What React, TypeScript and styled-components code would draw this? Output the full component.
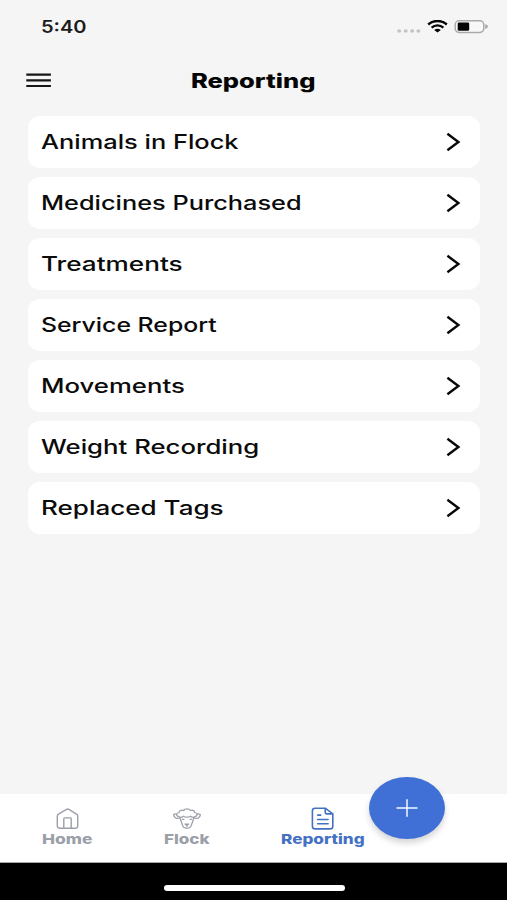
import { useLayoutEffect, useRef, useState } from "react";
import type { ReactNode } from "react";
import styled, { createGlobalStyle } from "styled-components";

const GlobalStyle = createGlobalStyle`
  * { box-sizing: border-box; }
  html, body { margin: 0; padding: 0; }
  body { background: #f5f5f5; font-family: Inter, "Open Sans", sans-serif; }
  button { border: 0; padding: 0; background: none; font: inherit; color: inherit; }
`;

const Screen = styled.div`
  width: 507px;
  height: 900px;
  display: flex;
  flex-direction: column;
  background: #f5f5f5;
  overflow: hidden;
`;

const StatusBar = styled.header`
  height: 53px;
  flex: none;
  display: flex;
  align-items: center;
  justify-content: space-between;
  padding: 0 19px 0 41px;
`;

const StatusIcons = styled.div`
  display: flex;
  align-items: center;
`;

const TitleBar = styled.div`
  height: 55px;
  flex: none;
  display: grid;
  grid-template-columns: 1fr auto 1fr;
  align-items: center;
  padding: 0 27px 0 26px;
`;

const MenuButton = styled.button`
  width: 25px;
  height: 16px;
  display: flex;
`;

const List = styled.main`
  flex: 1;
  display: flex;
  flex-direction: column;
  gap: 9px;
  padding: 8px 27px 0 28px;
`;

const Row = styled.button`
  height: 52px;
  flex: none;
  display: flex;
  align-items: center;
  justify-content: space-between;
  padding: 0 19px 0 13px;
  border-radius: 13px / 11px;
  background: #fff;
`;

const NavBar = styled.nav`
  position: relative;
  height: 69px;
  flex: none;
  display: flex;
  background: #fff;
  border-bottom: 1px solid #a9a9a9;
`;

const NavItem = styled.button<{ $width: number; $active?: boolean }>`
  width: ${(p) => p.$width}px;
  height: 68px;
  display: flex;
  flex-direction: column;
  align-items: center;
  padding-top: 13px;
  color: ${(p) => (p.$active ? "#4571c4" : "#9b9fa8")};

  svg { flex: none; }
`;

const AddButton = styled.button`
  position: absolute;
  left: 369px;
  top: -17px;
  width: 76px;
  height: 62px;
  display: flex;
  align-items: center;
  justify-content: center;
  border-radius: 50%;
  background: #4070d5;
  box-shadow: 0 4px 6px rgba(0, 0, 0, 0.17);
`;

const HomeArea = styled.footer`
  height: 37px;
  flex: none;
  display: flex;
  justify-content: center;
  align-items: flex-start;
  padding: 22px 0 0 1px;
  background: #000;
`;

const HomeIndicator = styled.div`
  width: 181px;
  height: 6px;
  border-radius: 3px;
  background: #fff;
`;

const LabelBox = styled.span<{ $width: number; $size: number; $weight: number; $color: string; $drop: number }>`
  display: block;
  width: ${(p) => p.$width}px;
  padding-top: ${(p) => p.$drop}px;
  font-size: ${(p) => p.$size}px;
  line-height: 1.2;
  font-weight: ${(p) => p.$weight};
  color: ${(p) => p.$color};
  white-space: nowrap;
  text-align: left;
`;

const Stretch = styled.span`
  display: inline-block;
  transform-origin: 0 50%;
`;

type WideLabelProps = {
  width: number;
  size: number;
  weight: number;
  color?: string;
  drop?: number;
  children: ReactNode;
};

/* Extends a line of text horizontally until it fills the given width. */
function WideLabel({ width, size, weight, color = "#0b0b0b", drop = 0, children }: WideLabelProps) {
  const ref = useRef<HTMLSpanElement>(null);
  const [scale, setScale] = useState(1);
  useLayoutEffect(() => {
    if (ref.current) setScale(width / ref.current.offsetWidth);
  }, [width, children]);
  return (
    <LabelBox $width={width} $size={size} $weight={weight} $color={color} $drop={drop}>
      <Stretch ref={ref} style={{ transform: `scaleX(${scale})` }}>{children}</Stretch>
    </LabelBox>
  );
}

const Signal = () => (
  <svg width="24" height="6" viewBox="0 0 24 6" fill="#c3c3c3">
    <ellipse cx="2.2" cy="3" rx="2" ry="1.7" />
    <ellipse cx="8.7" cy="3" rx="2" ry="1.7" />
    <ellipse cx="15.1" cy="3" rx="2" ry="1.7" />
    <ellipse cx="21.4" cy="3" rx="2" ry="1.7" />
  </svg>
);

const SignalSlot = styled.span`
  display: flex;
  padding: 8px 6px 0 0;
`;

const Wifi = () => (
  <svg width="21" height="13" viewBox="0 0 21 13" fill="none" stroke="#050505">
    <path d="M1.2 4.5C6.4-.2 14.6-.2 19.8 4.5" strokeWidth="2.4" />
    <path d="M4.6 7.6C8 4.6 13 4.6 16.4 7.6" strokeWidth="2.3" />
    <path d="M10.5 12.6 7.2 9.9Q10.5 7.7 13.8 9.9Z" fill="#050505" stroke="none" />
  </svg>
);

const BatterySlot = styled.span`
  display: flex;
  padding-left: 6px;
`;

const Battery = () => (
  <svg width="34" height="14" viewBox="0 0 34 14">
    <rect x="1.2" y=".8" width="28.6" height="11.6" rx="3.8" fill="#f8f8f8" stroke="#aaa" strokeWidth="1.5" />
    <rect x="3.7" y="2.4" width="11.5" height="8.4" rx="1.4" fill="#050505" />
    <path d="M31.2 4.3Q34 4.8 34 6.6T31.2 8.9Z" fill="#aaa" />
  </svg>
);

const MenuIcon = () => (
  <svg width="25" height="16" viewBox="0 0 25 16" stroke="#161616" strokeWidth="2.2">
    <path d="M.3 1.7h24.6M.3 7.4h24.6M.3 13h24.6" />
  </svg>
);

const Chevron = () => (
  <svg width="15" height="20" viewBox="0 0 15 20" fill="none" stroke="#080808" strokeWidth="2.4">
    <path d="m1.4 1.8 11 8.2-11 8.2" />
  </svg>
);

const HomeIcon = () => (
  <svg width="24" height="24" viewBox="0 0 24 24" fill="none" stroke="currentColor" strokeWidth="1.4" strokeLinejoin="round">
    <path d="M2.3 9Q2.3 7.8 3.5 7.1L11.5 2.4Q12.7 1.7 13.9 2.4L21.5 7.1Q22.7 7.8 22.7 9V19Q22.7 21.3 20 21.3H5Q2.3 21.3 2.3 19Z" />
    <path d="M8.8 21.2v-9.5q0-.8.9-.8h5.6q.9 0 .9.8v9.5" />
  </svg>
);

const SheepIcon = () => (
  <svg width="28" height="24" viewBox="0 0 28 24" fill="none" stroke="currentColor" strokeWidth="1.25" strokeLinejoin="round" strokeLinecap="round">
    <path d="M5.3 9.3C2.8 9 3.2 5.6 6 5.5 6.2 3.2 9 2.7 10.6 3.5 12.2 1.4 16 1.4 17.2 3.5 19.2 2.6 21.6 3.5 21.6 5.5 24.6 5.6 25 9 22.3 9.3 20.8 10.6 18.8 10.4 17.6 9.2 15.7 10.5 12.2 10.5 10.3 9.2 8.8 10.6 6.7 10.4 5.3 9.3Z" />
    <path d="M3.8 7.2C2.8 6.6 1.3 7 .6 7.7 1 10.5 3.6 12.6 6.8 10.8M24 7.2C25 6.6 26.5 7 27.4 7.7 27 10.5 24.2 12.6 21 10.8" />
    <path d="M6.9 10.8 9.5 18.2Q10.2 21.3 13.9 21.3T18.3 18.2L21 10.8M9.3 12.3h1.6M17 12.3h1.6M12 17h3.8L13.9 18.5ZM13.9 18.5v1" />
  </svg>
);

const ReportIcon = () => (
  <svg width="24" height="24" viewBox="0 0 24 24" fill="none" stroke="currentColor" strokeWidth="1.6" strokeLinejoin="round" strokeLinecap="round">
    <path d="M5 1.2H15.2L22.8 6.9V19.2Q22.8 21.9 20 21.9H5.2Q2.4 21.9 2.4 19.2V3.8Q2.4 1.2 5 1.2Z" />
    <path d="M15.2 1.5v3.4q0 2 2.4 2h5M7.6 8.1h3.2M7.6 12.5h10.5M7.6 16.8h10.5" />
  </svg>
);

const PlusIcon = () => (
  <svg width="22" height="18" viewBox="0 0 22 18" stroke="#f5f8ff" strokeWidth="1.5" strokeLinecap="round">
    <path d="M1 9h20M11 .8v16.4" />
  </svg>
);

const reports = [
  { name: "Animals in Flock", width: 197 },
  { name: "Medicines Purchased", width: 261 },
  { name: "Treatments", width: 141.5 },
  { name: "Service Report", width: 176 },
  { name: "Movements", width: 144.5 },
  { name: "Weight Recording", width: 218 },
  { name: "Replaced Tags", width: 182 },
];

export default function App() {
  return (
    <>
      <GlobalStyle />
      <Screen>
        <StatusBar>
          <WideLabel width={46} size={17} weight={600} drop={2} color="#1c1c1c">5:40</WideLabel>
          <StatusIcons>
            <SignalSlot><Signal /></SignalSlot>
            <Wifi />
            <BatterySlot><Battery /></BatterySlot>
          </StatusIcons>
        </StatusBar>
        <TitleBar>
          <MenuButton aria-label="Menu"><MenuIcon /></MenuButton>
          <WideLabel width={124} size={19.5} weight={800} drop={2} color="#050505">Reporting</WideLabel>
        </TitleBar>
        <List>
          {reports.map((r) => (
            <Row key={r.name}>
              <WideLabel width={r.width} size={19.6} weight={500} drop={2}>{r.name}</WideLabel>
              <Chevron />
            </Row>
          ))}
        </List>
        <NavBar>
          <NavItem $width={134}>
            <HomeIcon />
            <WideLabel width={50} size={13.6} weight={800} color="#9b9fa8">Home</WideLabel>
          </NavItem>
          <NavItem $width={105}>
            <SheepIcon />
            <WideLabel width={45} size={13.6} weight={800} color="#9b9fa8">Flock</WideLabel>
          </NavItem>
          <NavItem $width={166} $active>
            <ReportIcon />
            <WideLabel width={83} size={13.6} weight={800} color="#4571c4">Reporting</WideLabel>
          </NavItem>
          <AddButton aria-label="Add"><PlusIcon /></AddButton>
        </NavBar>
        <HomeArea><HomeIndicator /></HomeArea>
      </Screen>
    </>
  );
}
